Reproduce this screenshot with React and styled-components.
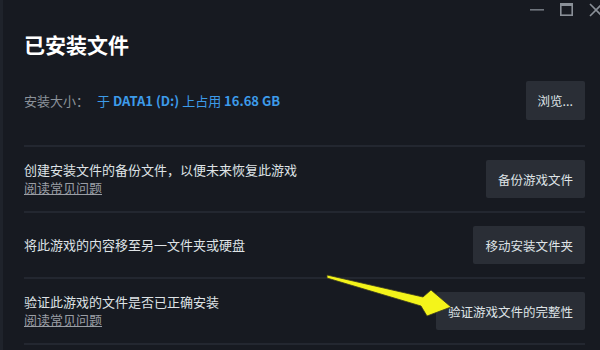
import styled, { createGlobalStyle } from 'styled-components';

const GlobalStyle = createGlobalStyle`
	html, body {
		margin: 0;
		padding: 0;
		background: #171a21;
	}
	* {
		box-sizing: border-box;
	}
`;

const Window = styled.div`
	position: relative;
	width: 600px;
	height: 350px;
	overflow: hidden;
	background: #171a21;
	border-left: 3px solid #1f232b;
	font-family: 'Noto Sans CJK SC', 'Noto Sans', sans-serif;
	color: #dfe3e6;
`;

const TitleBar = styled.div`
	height: 22px;
	display: flex;
	justify-content: flex-end;
	align-items: flex-start;
	gap: 16px;
	padding-top: 3px;
	margin-right: -3px;

	svg {
		display: block;
	}
`;

const Content = styled.div`
	padding: 0 15px 0 21px;
`;

const Title = styled.h1`
	margin: 8px 0 0;
	font-size: 21px;
	line-height: 28px;
	font-weight: 700;
	color: #ffffff;
`;

const InfoRow = styled.div`
	display: flex;
	align-items: center;
	justify-content: space-between;
	margin-top: 23px;
	margin-bottom: 25px;
`;

const InfoText = styled.div`
	font-size: 13px;
	display: flex;
	align-items: center;
`;

const Label = styled.span`
	color: #8b929a;
	margin-right: 8px;
`;

const Value = styled.span`
	color: #3d9be9;

	b {
		font-weight: 700;
	}
`;

const Divider = styled.div`
	height: 2px;
	background: #232730;
`;

const Row = styled.div`
	height: 64px;
	display: flex;
	align-items: center;
	justify-content: space-between;
`;

const Desc = styled.div`
	font-size: 13px;
	line-height: 18px;
	display: flex;
	flex-direction: column;
`;

const Link = styled.a`
	color: #9a9ea5;
	text-decoration: underline;
	cursor: pointer;
	width: fit-content;
`;

const Button = styled.button`
	height: ${(p) => (p.$tall ? 39 : 38)}px;
	padding: 0 12px;
	border: none;
	border-radius: 2px;
	background: #2a2e36;
	color: #dfe3e6;
	font-family: inherit;
	font-size: 12.5px;
	white-space: nowrap;
	cursor: pointer;
`;

const Arrow = styled.svg`
	position: absolute;
	left: 0;
	top: 0;
	pointer-events: none;
`;

const ROWS = [
	{ id: 1, text: '创建安装文件的备份文件，以便未来恢复此游戏', faq: true, button: '备份游戏文件' },
	{ id: 2, text: '将此游戏的内容移至另一文件夹或硬盘', faq: false, button: '移动安装文件夹' },
	{ id: 3, text: '验证此游戏的文件是否已正确安装', faq: true, button: '验证游戏文件的完整性' },
];

export default function App() {
	return (
		<>
			<GlobalStyle />
			<Window>
				<TitleBar>
					<svg width="14" height="14" viewBox="0 0 14 14">
						<rect x="0" y="6" width="14" height="1.6" fill="#6f757d" />
					</svg>
					<svg width="13" height="13" viewBox="0 0 13 13">
						<rect x="0.8" y="0.8" width="11.4" height="11.4" fill="none" stroke="#8a9098" strokeWidth="1.6" />
						<rect x="0.8" y="0.8" width="11.4" height="2.2" fill="#8a9098" />
					</svg>
					<svg width="14" height="14" viewBox="0 0 14 14">
						<path d="M1 1 L13 13 M13 1 L1 13" stroke="#8a9098" strokeWidth="1.6" />
					</svg>
				</TitleBar>
				<Content>
					<Title>已安装文件</Title>
					<InfoRow>
						<InfoText>
							<Label>安装大小：</Label>
							<Value>
								于 <b>DATA1 (D:)</b> 上占用 <b>16.68 GB</b>
							</Value>
						</InfoText>
						<Button $tall>浏览...</Button>
					</InfoRow>
					<Divider />
					{ROWS.map((row) => (
						<div key={row.id}>
							<Row>
								<Desc>
									<span>{row.text}</span>
									{row.faq && <Link>阅读常见问题</Link>}
								</Desc>
								<Button>{row.button}</Button>
							</Row>
							<Divider />
						</div>
					))}
				</Content>
				<Arrow width="600" height="350" viewBox="0 0 600 350">
					<polygon
						points="324,275 420,297 428,290 448,307 424,316 418,306 324,278"
						fill="#f4f41a"
						stroke="#3a3a20"
						strokeWidth="0.8"
						strokeLinejoin="round"
					/>
				</Arrow>
			</Window>
		</>
	);
}
